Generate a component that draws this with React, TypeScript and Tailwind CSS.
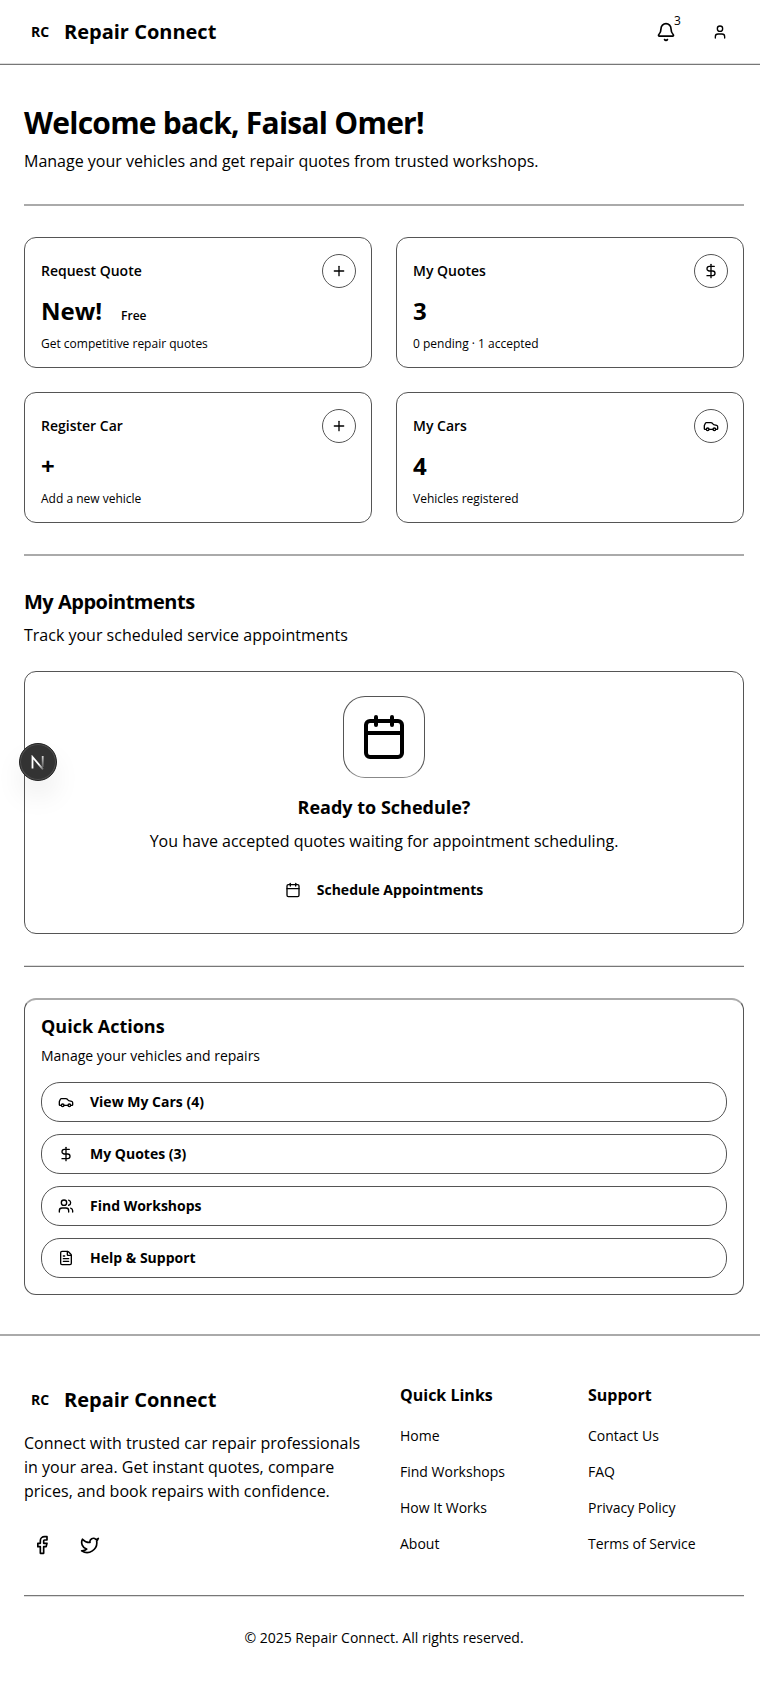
import React from "react";
import { Bell, User, Plus, DollarSign, Calendar, Users, FileText, Facebook, Twitter } from "lucide-react";

function CarIcon({ className }: { className?: string }) {
  return (
    <svg viewBox="0 0 24 24" fill="none" stroke="currentColor" strokeWidth="2" strokeLinecap="round" strokeLinejoin="round" className={className}>
      <path d="M19 17h2c.6 0 1-.4 1-1v-3c0-.9-.7-1.7-1.5-1.9L16 10s-1.300-1.400-2.200-2.300c-.5-.4-1.100-.7-1.800-.7H5c-.6 0-1.100.4-1.400.9l-1.400 2.900A3.700 3.700 0 0 0 2 12v4c0 .6.4 1 1 1h2" />
      <circle cx="7" cy="17" r="2" />
      <path d="M9 17h6" />
      <circle cx="17" cy="17" r="2" />
    </svg>
  );
}

function Divider() {
  return <div className="h-[2px] bg-[#aaaaaa]" />;
}

function Brand() {
  return (
    <div className="flex items-center gap-2">
      <div className="flex size-8 items-center justify-center text-sm font-bold">RC</div>
      <span className="text-xl font-bold">Repair Connect</span>
    </div>
  );
}

type StatProps = { title: string; value: string; note: string; badge?: string; icon: React.ReactNode };

function StatCard({ title, value, note, badge, icon }: StatProps) {
  return (
    <div className="h-[131px] rounded-[12px] border border-[#555] p-4">
      <div className="flex items-center justify-between">
        <span className="text-sm font-semibold">{title}</span>
        <span className="-mr-px flex size-[34px] items-center justify-center rounded-full border border-[#555]">{icon}</span>
      </div>
      <div className="mt-[7px] flex items-baseline">
        <span className="text-2xl font-bold">{value}</span>
        {badge && <span className="ml-[19px] text-xs font-semibold">{badge}</span>}
      </div>
      <p className="mt-[9px] text-xs">{note}</p>
    </div>
  );
}

function ActionButton({ icon, label }: { icon: React.ReactNode; label: string }) {
  return (
    <button className="flex h-10 w-full items-center gap-4 rounded-[19px] border border-[#555] px-4 text-sm font-bold">
      {icon}
      <span>{label}</span>
    </button>
  );
}

function LinkColumn({ title, links }: { title: string; links: string[] }) {
  return (
    <div>
      <h3 className="text-base font-bold">{title}</h3>
      <ul className="mt-[17px]">
        {links.map((l) => (
          <li key={l} className="mb-3 h-6 text-sm leading-6">{l}</li>
        ))}
      </ul>
    </div>
  );
}

export default function App() {
  return (
    <div className="relative h-[1696px] w-[760px] overflow-hidden bg-white font-['Open_Sans',sans-serif] text-black">
      <header className="flex h-16 items-center justify-between border-b border-[#ddd] px-6">
        <Brand />
        <div className="flex items-center">
          <div className="relative mr-[36px]">
            <Bell className="size-5" />
            <span className="absolute -top-[9px] left-[18px] text-xs leading-4 font-medium">3</span>
          </div>
          <User className="mr-2 size-4" />
        </div>
      </header>
      <div className="h-px bg-[#777]" />

      <main className="pt-10 pr-4 pl-6">
        <h1 className="text-3xl font-bold tracking-tight">Welcome back, Faisal Omer!</h1>
        <p className="mt-2 mb-[31px]">Manage your vehicles and get repair quotes from trusted workshops.</p>
        <Divider />

        <div className="mt-[31px] mb-[31px] grid grid-cols-2 gap-6">
          <StatCard title="Request Quote" value="New!" badge="Free" note="Get competitive repair quotes" icon={<Plus className="size-4" />} />
          <StatCard title="My Quotes" value="3" note="0 pending · 1 accepted" icon={<DollarSign className="size-4" />} />
          <StatCard title="Register Car" value="+" note="Add a new vehicle" icon={<Plus className="size-4" />} />
          <StatCard title="My Cars" value="4" note="Vehicles registered" icon={<CarIcon className="size-4" />} />
        </div>
        <Divider />

        <section className="mt-8 mb-[31px]">
          <h2 className="text-xl leading-7 font-bold tracking-tight">My Appointments</h2>
          <p className="mt-[7px] mb-6">Track your scheduled service appointments</p>
          <div className="flex h-[263px] flex-col items-center rounded-[12px] border border-[#555] pt-6">
            <div className="flex size-[82px] items-center justify-center rounded-[22px] border border-[#555] border-b-[#888]">
              <Calendar className="size-12" />
            </div>
            <h3 className="mt-[15px] text-lg font-bold">Ready to Schedule?</h3>
            <p className="mt-2">You have accepted quotes waiting for appointment scheduling.</p>
            <button className="mt-[17px] flex h-10 items-center gap-4 text-sm font-bold">
              <Calendar className="size-4" />
              <span>Schedule Appointments</span>
            </button>
          </div>
        </section>
        <div className="border-t border-[#ddd]"><div className="h-px bg-[#777]" /></div>

        <section className="mt-[31px] h-[297px] rounded-[12px] border border-t-2 border-[#555] border-t-[#aaa] px-4 pt-[12px]">
          <h2 className="text-lg font-bold">Quick Actions</h2>
          <p className="mt-1.5 text-sm">Manage your vehicles and repairs</p>
          <div className="mt-4 flex flex-col gap-3">
            <ActionButton icon={<CarIcon className="size-4" />} label="View My Cars (4)" />
            <ActionButton icon={<DollarSign className="size-4" />} label="My Quotes (3)" />
            <ActionButton icon={<Users className="size-4" />} label="Find Workshops" />
            <ActionButton icon={<FileText className="size-4" />} label="Help & Support" />
          </div>
        </section>
      </main>

      <footer className="mt-[39px] border-t-2 border-[#aaa] pt-[47px] pr-4 pl-6">
        <div className="flex h-[212px]">
          <div className="w-[376px] pt-px">
            <Brand />
            <p className="mt-[15px] w-[344px]">Connect with trusted car repair professionals in your area. Get instant quotes, compare prices, and book repairs with confidence.</p>
            <div className="mt-8 flex gap-[28px] pl-2">
              <Facebook className="size-5" />
              <Twitter className="size-5" />
            </div>
          </div>
          <div className="w-[188px]">
            <LinkColumn title="Quick Links" links={["Home", "Find Workshops", "How It Works", "About"]} />
          </div>
          <LinkColumn title="Support" links={["Contact Us", "FAQ", "Privacy Policy", "Terms of Service"]} />
        </div>
        <div className="border-b border-[#ddd]"><div className="h-px bg-[#777]" /></div>
        <p className="mt-[31px] text-center text-sm">© 2025 Repair Connect. All rights reserved.</p>
      </footer>

      <div className="absolute top-[743px] left-[19px] flex size-[38px] items-center justify-center rounded-full border border-[#222] bg-[#333] shadow-[inset_0_0_0_1px_#505050,0_16px_32px_-8px_rgba(0,0,0,0.2)]">
        <svg viewBox="0 0 14 15" className="h-[15px] w-[14px]" fill="none" strokeWidth="1.800">
          <defs>
            <linearGradient id="diag" x1="8" y1="9" x2="12" y2="14" gradientUnits="userSpaceOnUse">
              <stop stopColor="#fff" />
              <stop offset="1" stopColor="#fff" stopOpacity="0.3" />
            </linearGradient>
            <linearGradient id="stem" x1="0" y1="1" x2="0" y2="12" gradientUnits="userSpaceOnUse">
              <stop stopColor="#fff" stopOpacity="0.8" />
              <stop offset="1" stopColor="#fff" stopOpacity="0.2" />
            </linearGradient>
          </defs>
          <path d="M1.500 13.500V2L12 14.300" stroke="url(#diag)" />
          <path d="M11.700 1v11" stroke="url(#stem)" />
        </svg>
      </div>
    </div>
  );
}
